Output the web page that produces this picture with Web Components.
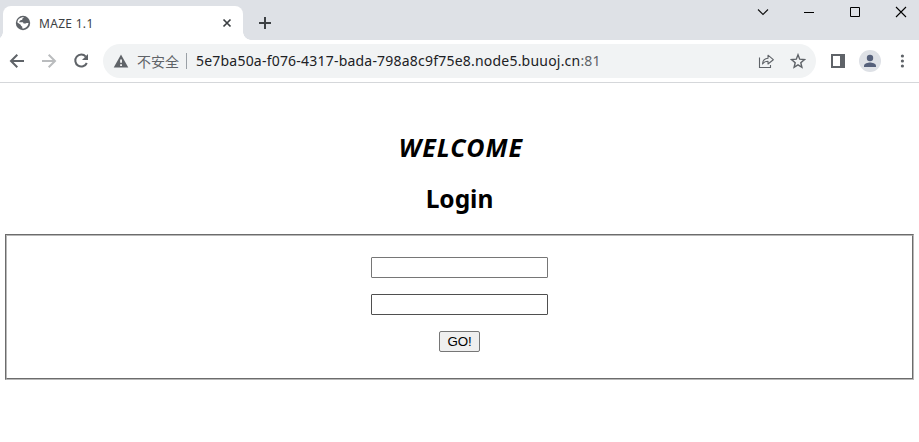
<!DOCTYPE html>
<html lang="zh-CN">
<head>
<meta charset="utf-8">
<title>MAZE 1.1</title>
<style>
html, body { margin: 0; height: 100%; background: #fff; overflow: hidden; }
body { font-family: "Noto Sans", "Noto Sans CJK SC", sans-serif; }
</style>
</head>
<body>
<browser-window>
  <tab-strip slot="tabs"><browser-tab>MAZE 1.1</browser-tab></tab-strip>
  <nav-toolbar slot="toolbar"><address-bar><span slot="status">不安全</span><span slot="host">5e7ba50a-f076-4317-bada-798a8c9f75e8.node5.buuoj.cn</span><span slot="port">:81</span></address-bar></nav-toolbar>
  <login-page><span slot="greeting">WELCOME</span><span slot="title">Login</span><span slot="action">GO!</span></login-page>
</browser-window>
<script>
function define(name, markup) {
  customElements.define(name, class extends HTMLElement {
    constructor() {
      super();
      this.attachShadow({ mode: 'open' }).innerHTML = markup;
    }
  });
}

define('browser-window', `
<style>
:host { display: flex; flex-direction: column; width: 100%; height: 100vh; }
</style>
<slot name="tabs"></slot><slot name="toolbar"></slot><slot></slot>`);

define('tab-strip', `
<style>
:host { display: flex; justify-content: space-between; height: 40px; box-sizing: border-box; background: #dee1e6; flex: none; }
.left { display: flex; align-items: flex-end; }
.plus { width: 16px; height: 16px; margin: 0 0 9px 14px; }
.window { display: grid; grid-template-columns: repeat(4, 46px); height: 24px; place-items: center; margin-right: -5px; }
svg { display: block; }
</style>
<div class="left"><slot></slot>
<svg class="plus" viewBox="0 0 16 16"><path d="M8 2v12M2 8h12" stroke="#3c4043" stroke-width="2"/></svg></div>
<div class="window">
<svg width="16" height="16" viewBox="0 0 16 16" fill="none" stroke="#111" stroke-width="1.100"><path d="M3 5.500l5 5 5-5"/></svg>
<svg width="16" height="16" viewBox="0 0 16 16" fill="none" stroke="#000"><path d="M3 8.500h10"/></svg>
<svg width="16" height="16" viewBox="0 0 16 16" fill="none" stroke="#000"><path d="M3.500 3.500h9v9h-9z"/></svg>
<svg width="16" height="16" viewBox="0 0 16 16" fill="none" stroke="#000" stroke-width="1.100"><path d="M3 3l10 10M13 3L3 13"/></svg>
</div>`);

define('browser-tab', `
<style>
:host { display: flex; align-items: center; position: relative; width: 240px; height: 34px; box-sizing: border-box; margin-left: 3px; padding: 0 11px 0 12px; background: #fff; border-radius: 8px 8px 0 0; color: #3c4043; font-size: 12px; }
:host::before, :host::after { content: ""; position: absolute; bottom: 0; width: 8px; height: 8px; }
:host::before { left: -8px; background: radial-gradient(circle at 0 0, transparent 7.5px, #fff 8px); }
:host::after { right: -8px; background: radial-gradient(circle at 100% 0, transparent 7.5px, #fff 8px); }
.title { flex: 1; margin: 2px 0 0 8px; line-height: 16px; letter-spacing: .3px; }
</style>
<svg width="16" height="16" viewBox="0 0 16 16"><circle cx="8" cy="8" r="7.200" fill="#5f6368"/><path d="M9.300 2.400C8.200 2.600 7.300 3.200 7.400 4c.1.8-.4 1.100-1.300 1.100-.9.1-.8.9-1.500 1.100l-.6 1h3.200c1 0 1.300.6 1.300 1.400h1.300c.7 0 1-.6 1.800-.7l1.900.1C13.200 10.900 11 13.500 7.400 13.600l-.2-2.200c-.9-.1-1.500-.7-1.500-1.600L2.400 7.500C2.500 4.700 5 2 9.300 2.400z" fill="#fff"/><path d="M9 2.200l2.500.8 1.800 2.500.4 2.300-2.100-.3-.9-1.500-1.900-.5-.2-1.700z" fill="#5f6368"/></svg>
<div class="title"><slot></slot></div>
<svg width="10" height="10" viewBox="0 0 10 10"><path d="M1.500 1.500l7 7M8.500 1.500l-7 7" stroke="#3c4043" stroke-width="1.700"/></svg>`);

define('nav-toolbar', `
<style>
:host { display: flex; align-items: center; height: 43px; box-sizing: border-box; border-bottom: 1px solid #d5d7da; padding: 0 7px 0 7px; background: #fff; flex: none; }
svg { display: block; flex: none; }
.nav { display: flex; gap: 12px; margin-right: 12px; }
slot { display: block; flex: 1; }
.side { margin-left: 12px; }
.user { margin-left: 11px; }
.more { margin-left: 11px; }
</style>
<div class="nav">
<svg width="20" height="20" viewBox="0 0 20 20" fill="none" stroke="#5f6368" stroke-width="2"><path d="M17 10H4.500M10.300 3.700L4 10l6.300 6.300"/></svg>
<svg width="20" height="20" viewBox="0 0 20 20" fill="none" stroke="#babcbe" stroke-width="2"><path d="M3 10h12.500M9.700 3.700L16 10l-6.300 6.300"/></svg>
<svg width="20" height="20" viewBox="0 0 20 20"><path d="M14.800 5.600A6 6 0 1 0 15.800 12" fill="none" stroke="#5f6368" stroke-width="2"/><path d="M17 3v6h-6z" fill="#5f6368"/></svg>
</div>
<slot></slot>
<svg class="side" width="20" height="20" viewBox="0 0 20 20"><path d="M3 3h14v14H3zM5 5v10h7V5z" fill="#5f6368" fill-rule="evenodd"/></svg>
<svg class="user" width="22" height="22" viewBox="0 0 22 22"><circle cx="11" cy="11" r="11" fill="#dee1e6"/><circle cx="11" cy="8" r="3.200" fill="#55607a"/><path d="M5 17v-1.500c0-2 4-3.100 6-3.100s6 1.100 6 3.100V17z" fill="#55607a"/></svg>
<svg class="more" width="20" height="20" viewBox="0 0 20 20" fill="#5f6368"><circle cx="10.400" cy="5" r="1.600"/><circle cx="10.400" cy="10" r="1.600"/><circle cx="10.400" cy="15" r="1.600"/></svg>`);

define('address-bar', `
<style>
:host { display: flex; align-items: center; height: 34px; border-radius: 17px; background: #f1f3f4; padding: 0 10px; box-sizing: border-box; font-size: 14px; line-height: 20px; white-space: nowrap; }
svg { display: block; flex: none; }
.status { width: 43px; margin: -1px 0 0 8px; color: #5f6368; font-family: "Noto Sans CJK SC", sans-serif; font-weight: 400; }
.rule { width: 1px; height: 16px; background: #9aa0a6; margin: 0 9px 0 6px; }
.url { flex: 1; color: #202124; letter-spacing: .21px; }
.port { color: #5f6368; }
.share { margin-right: 16px; }
</style>
<svg width="16" height="16" viewBox="0 0 16 16"><path d="M8 1.500l7.300 13H.7z" fill="#5f6368"/><path d="M7.200 6.500h1.700v3.300H7.200zM7.200 11.200h1.700v1.700H7.200z" fill="#fff"/></svg>
<span class="status"><slot name="status"></slot></span><span class="rule"></span>
<span class="url"><slot name="host"></slot><span class="port"><slot name="port"></slot></span></span>
<svg class="share" width="16" height="16" viewBox="0 0 16 16" fill="none" stroke="#5f6368" stroke-width="1.100"><path d="M1.500 4.500v10h11v-2.500"/><path d="M4.500 11c.3-4 2.300-5.700 5.500-5.800V2.200L15.300 6.700l-5.300 4.300V8.300C7.500 8.300 5.800 9.200 4.500 11z" stroke-linejoin="round"/></svg>
<svg width="16" height="16" viewBox="0 0 16 16"><path d="M8 1.800l1.700 4.400 4.700.4-3.600 3.100 1.100 4.600L8 11.900l-3.900 2.400 1.100-4.600L1.600 6.600l4.700-.4z" fill="none" stroke="#5f6368" stroke-width="1.400"/></svg>`);

define('login-page', `
<style>
:host { display: block; flex: 1; padding: 46px 5px 0; color: #000; text-align: center; }
h2 { margin: 0; font-size: 24.5px; line-height: 36px; font-weight: 700; }
.welcome { padding-left: 3px; font-style: italic; font-size: 25px; letter-spacing: 1.05px; }
.login { margin: 16px 0 17px; }
.frame { border: 1px solid; border-color: #6c6c6c #b8b8b8 #b8b8b8 #6c6c6c; }
form { display: flex; flex-direction: column; align-items: center; gap: 16px; margin: 0; height: 144px; box-sizing: border-box; padding-top: 21px; border: 1px solid; border-color: #b8b8b8 #6c6c6c #6c6c6c #b8b8b8; }
input { width: 177px; height: 21px; box-sizing: border-box; margin: 0; padding: 1px 2px; border: 1px solid #767676; border-radius: 1px; background: #fff; outline: none; }
.second { border-color: #4f4f4f; }
button { width: 41px; height: 21px; box-sizing: border-box; padding: 0; border: 1px solid #767676; border-radius: 2px; background: #efefef; color: #000; font: 13.333px/19px "Liberation Sans", sans-serif; letter-spacing: -.2px; }
</style>
<h2 class="welcome"><slot name="greeting"></slot></h2>
<h2 class="login"><slot name="title"></slot></h2>
<div class="frame"><form><input type="text"><input class="second" type="password"><button type="button"><slot name="action"></slot></button></form></div>`);
</script>
</body>
</html>
